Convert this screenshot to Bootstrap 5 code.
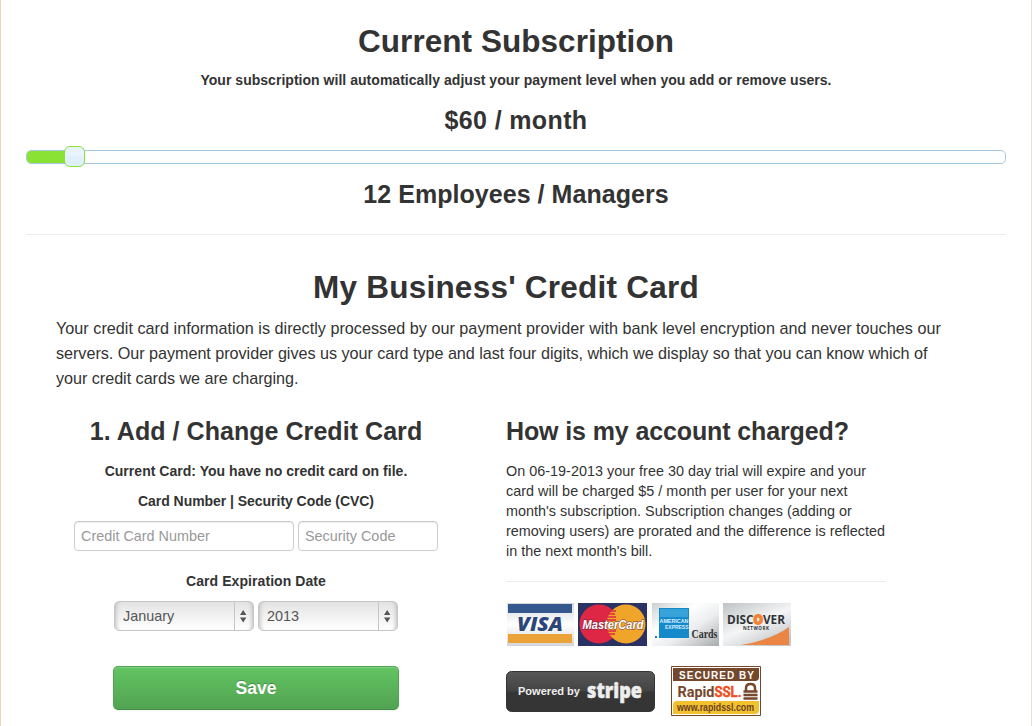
<!DOCTYPE html>
<html lang="en">
<head>
<meta charset="utf-8">
<meta name="viewport" content="width=device-width, initial-scale=1">
<title>Current Subscription</title>
<link rel="stylesheet" href="https://cdn.jsdelivr.net/npm/bootstrap@5.3.0/dist/css/bootstrap.min.css">
<style>
body{font-family:"Liberation Sans",Arial,sans-serif;font-size:14px;line-height:20px;color:#333;background:#fff;overflow:hidden}
.sheet{height:726px;border-left:1px solid #eed5b8;border-right:1px solid #eee0d3;padding:21px 25px 0}
h2,h3,p{margin:0;white-space:nowrap}
h2{font-size:31.5px;line-height:40px;font-weight:700;letter-spacing:.05px}
h3{font-size:25px;line-height:38px;padding-bottom:2px;font-weight:700;letter-spacing:.05px}
.bold-line{font-weight:700;letter-spacing:.03px}
.subtitle{margin-top:9px}
.section-heading{letter-spacing:.24px;margin-top:32px;padding-right:20px}
.price{letter-spacing:.37px;margin-top:11px}
.staff{margin-top:11px}
.divider{margin-top:19px}
.question{letter-spacing:-.12px}
.copy{font-size:16.2px;line-height:25px;letter-spacing:-.04px;margin-top:9px;padding-left:30px}
.copy span{letter-spacing:.015px}
.details{font-size:14.4px;letter-spacing:.015px;margin-top:9px}
.rule{height:1px;background:#ececec}
.track{height:14px;border:1px solid #a6c9e2;border-radius:5px;background:#fcfffe;margin-top:9px}
.fill{height:12px;background:#8ae234;border-radius:4px 0 0 4px}
.knob{top:-5px;left:37px;width:21px;height:21px;border:1px solid #8ae234;border-radius:6px;background:linear-gradient(#e9f3fd 48%,#dfeffc 52%)}
.columns{padding-left:30px;margin-top:21px}
.entry-col{width:400px}
.info-col{width:380px;margin-left:50px}
.current{margin-top:9px}
.label-row{margin-top:10px;letter-spacing:-.04px}
.expiry{margin-top:20px;letter-spacing:.07px}
.field{height:30px;border:1px solid #ccc;border-radius:4px;padding:4px 6px;font-size:14.4px;line-height:20px;box-shadow:inset 0 1px 1px rgba(0,0,0,.075);min-width:0}
.field::placeholder{color:#999;opacity:1}
.number{width:220px}
.code{width:140px}
.fields{gap:4px;margin-top:10px}
.picker{width:140px;height:30px;border:1px solid #c6c6c6;border-radius:5px;background:linear-gradient(#e3e3e3,#fff);box-shadow:inset 5px 0 4px -4px #bbb,inset -5px 0 4px -4px #bbb;color:#555;padding:0 0 0 8px;font-size:14.4px}
.save{width:286px;height:44px;border:1px solid;border-color:#51a351 #51a351 #438c43;border-radius:5px;background:linear-gradient(#62c462,#51a351);box-shadow:inset 0 1px 0 rgba(255,255,255,.2),0 1px 2px rgba(0,0,0,.05);color:#fff;font-size:17.5px;font-weight:700;line-height:20px;text-shadow:0 -1px 0 rgba(0,0,0,.25);margin-top:35px;padding:0}
svg{display:block;flex:none}
.brands{margin-top:20px;gap:4px}
.seals{margin-top:20px;gap:16px}
</style>
</head>
<body>
<main class="sheet">
<section class="text-center">
<h2>Current Subscription</h2>
<p class="bold-line subtitle">Your subscription will automatically adjust your payment level when you add or remove users.</p>
<h3 class="price">$60 / month</h3>
<div class="track position-relative"><div class="fill" style="width:4.9%"></div><div class="knob position-absolute"></div></div>
<h3 class="staff">12 Employees / Managers</h3>
</section>
<div class="rule divider"></div>
<section>
<h2 class="text-center section-heading">My Business' Credit Card</h2>
<p class="copy"><span>Your credit card information is directly processed by our payment provider with bank level encryption and never touches our</span><br>servers. Our payment provider gives us your card type and last four digits, which we display so that you can know which of<br>your credit cards we are charging.</p>
<div class="columns d-flex">
<form class="entry-col d-flex flex-column align-items-center">
<h3>1. Add / Change Credit Card</h3>
<p class="bold-line current">Current Card: You have no credit card on file.</p>
<p class="fw-bold label-row">Card Number | Security Code (CVC)</p>
<div class="fields d-flex">
<input class="field number" type="text" placeholder="Credit Card Number" aria-label="Credit Card Number">
<input class="field code" type="text" placeholder="Security Code" aria-label="Security Code">
</div>
<p class="fw-bold expiry">Card Expiration Date</p>
<div class="fields d-flex">
<button type="button" class="picker d-flex align-items-center justify-content-between"><span>January</span><svg width="19" height="28"><path d="M.5 0v28" stroke="#c6c6c6"/><path d="M6 13 9.200 8l3.200 5zM6 15.500h6.400L9.200 20.500z" fill="#555"/></svg></button>
<button type="button" class="picker d-flex align-items-center justify-content-between"><span>2013</span><svg width="19" height="28"><path d="M.5 0v28" stroke="#c6c6c6"/><path d="M6 13 9.200 8l3.200 5zM6 15.500h6.400L9.200 20.500z" fill="#555"/></svg></button>
</div>
<button type="button" class="save">Save</button>
</form>
<div class="info-col">
<h3 class="question">How is my account charged?</h3>
<p class="details">On 06-19-2013 your free 30 day trial will expire and your<br>card will be charged $5 / month per user for your next<br>month's subscription. Subscription changes (adding or<br>removing users) are prorated and the difference is reflected<br>in the next month's bill.</p>
<div class="rule" style="margin-top:20px"></div>
<div class="brands d-flex">
<svg width="68" height="44" viewBox="0 0 68 44">
<defs>
<linearGradient id="silver" x1="0" y1="0" x2="1" y2="1"><stop offset="0" stop-color="#ccd0d2"/><stop offset=".35" stop-color="#fff"/><stop offset=".6" stop-color="#eceeef"/><stop offset="1" stop-color="#a8abad"/></linearGradient>
<linearGradient id="steel" x1="0" y1="0" x2=".7" y2="1"><stop offset="0" stop-color="#bfc3c5"/><stop offset=".55" stop-color="#f4f5f6"/><stop offset="1" stop-color="#c4c7c9"/></linearGradient>
<linearGradient id="pearl" x1="0" y1="0" x2="0" y2="1"><stop offset="0" stop-color="#d5d9dd"/><stop offset=".5" stop-color="#fff"/><stop offset="1" stop-color="#d3d6da"/></linearGradient>
</defs>
<path fill="url(#pearl)" d="M1 1h67v43H1z"/><path fill="#35598f" d="M2 2h64v9H2z"/><path fill="#eba236" d="M2 32h64v9H2z"/>
<text x="34" y="28.500" text-anchor="middle" font-family="Open Sans" font-weight="800" font-style="italic" font-size="20" textLength="46" lengthAdjust="spacingAndGlyphs" fill="#2c4679">VISA</text>
</svg>
<svg width="70" height="44" viewBox="0 0 70 44">
<path fill="#2a3163" d="M0 1h69v43H0z"/><circle cx="21" cy="22" r="19.500" fill="#de2744"/><circle cx="48" cy="22" r="19.500" fill="#efa42a"/>
<path d="M31 9h7M30 12h7M29 15h9M29 18h9M29 29h9M30 32h7" stroke="#de2744" stroke-width="1.300"/>
<text x="4.500" y="26.500" font-family="Liberation Sans" font-weight="700" font-style="italic" font-size="13" textLength="61" lengthAdjust="spacingAndGlyphs" fill="#fff" stroke="#5a2740" stroke-width="1.300" stroke-opacity=".65" paint-order="stroke">MasterCard</text>
</svg>
<svg width="67" height="44" viewBox="0 0 67 44">
<path fill="url(#silver)" d="M0 1h67v43H0z"/><path fill="#1689cb" d="M7 6h30v30H7z"/><path fill="#38a2da" d="M8 7h28v8H8z"/>
<g font-family="Liberation Sans" font-weight="700" font-size="5.500" fill="#d9f1ff"><text x="7.500" y="21" textLength="29" lengthAdjust="spacingAndGlyphs">AMERICAN</text><text x="13" y="27" textLength="23.500" lengthAdjust="spacingAndGlyphs">EXPRESS</text></g>
<path fill="#187fc0" d="M3 34h2v2H3z"/><text x="39.500" y="36" font-family="Liberation Serif" font-weight="700" font-size="11.500" textLength="26" lengthAdjust="spacingAndGlyphs" fill="#333">Cards</text>
</svg>
<svg width="68" height="44" viewBox="0 0 68 44">
<path fill="url(#steel)" d="M0 1h68v43H0z"/><path fill="#ea8544" d="M18 43Q48 38 66 25v18z"/>
<text x="4" y="21.500" font-family="Open Sans" font-weight="700" font-size="13" textLength="58" lengthAdjust="spacingAndGlyphs" fill="#303337">DISC<tspan fill="#f58232" stroke="#f58232" stroke-width="1.800">O</tspan>VER</text>
<text x="20" y="27.700" font-family="Open Sans" font-weight="700" font-size="4.500" textLength="26" lengthAdjust="spacing" fill="#303337">NETWORK</text>
</svg>
</div>
<div class="seals d-flex">
<svg width="149" height="50" viewBox="0 0 149 50">
<defs><linearGradient id="coal" x1="0" y1="0" x2="0" y2="1"><stop offset="0" stop-color="#585858"/><stop offset=".49" stop-color="#434343"/><stop offset=".51" stop-color="#363636"/><stop offset="1" stop-color="#343434"/></linearGradient></defs>
<rect x=".5" y="5.500" width="148" height="40" rx="5" fill="url(#coal)" stroke="#343434"/>
<text x="12" y="29" font-family="Liberation Sans" font-weight="700" font-size="11" textLength="62" lengthAdjust="spacingAndGlyphs" fill="#eee">Powered by</text>
<text x="81" y="32" font-family="Open Sans" font-weight="800" font-size="21" textLength="55" lengthAdjust="spacingAndGlyphs" fill="#eee" stroke="#eee" stroke-width=".5">stripe</text>
</svg>
<svg width="90" height="50" viewBox="0 0 90 50">
<path fill="#fff" stroke="#75472b" d="M.5.5h89v49H.5z"/><path fill="#75472b" d="M2 2h86v9q0 4-4 4H2z"/><path fill="#f2c22e" d="M6 35h82v9q0 4-4 4H2v-9q0-4 4-4z"/>
<text x="8" y="12.500" font-family="Liberation Sans" font-weight="700" font-size="10" textLength="75" fill="#fff">SECURED BY</text>
<g font-family="Roboto" font-weight="700" font-size="14.500"><text x="6.500" y="30.500" textLength="37" lengthAdjust="spacingAndGlyphs" fill="#75472b">Rapid</text><text x="43.500" y="30.500" textLength="27" lengthAdjust="spacingAndGlyphs" fill="#f04d24" stroke="#f04d24" stroke-width=".4">SSL.</text></g>
<path d="M75 25v-3q0-4 4.500-4t4.500 4v3" fill="none" stroke="#75472b" stroke-width="2.500"/><path d="M72.500 25.500h14M72.500 29h14M72.500 32.500h14" stroke="#75472b" stroke-width="2.700"/>
<text x="6" y="45" font-family="Liberation Sans" font-weight="700" font-size="10" textLength="77" lengthAdjust="spacingAndGlyphs" fill="#6d4126">www.rapidssl.com</text>
</svg>
</div>
</div>
</div>
</section>
</main>
<script src="https://cdn.jsdelivr.net/npm/bootstrap@5.3.0/dist/js/bootstrap.bundle.min.js"></script>
</body>
</html>
